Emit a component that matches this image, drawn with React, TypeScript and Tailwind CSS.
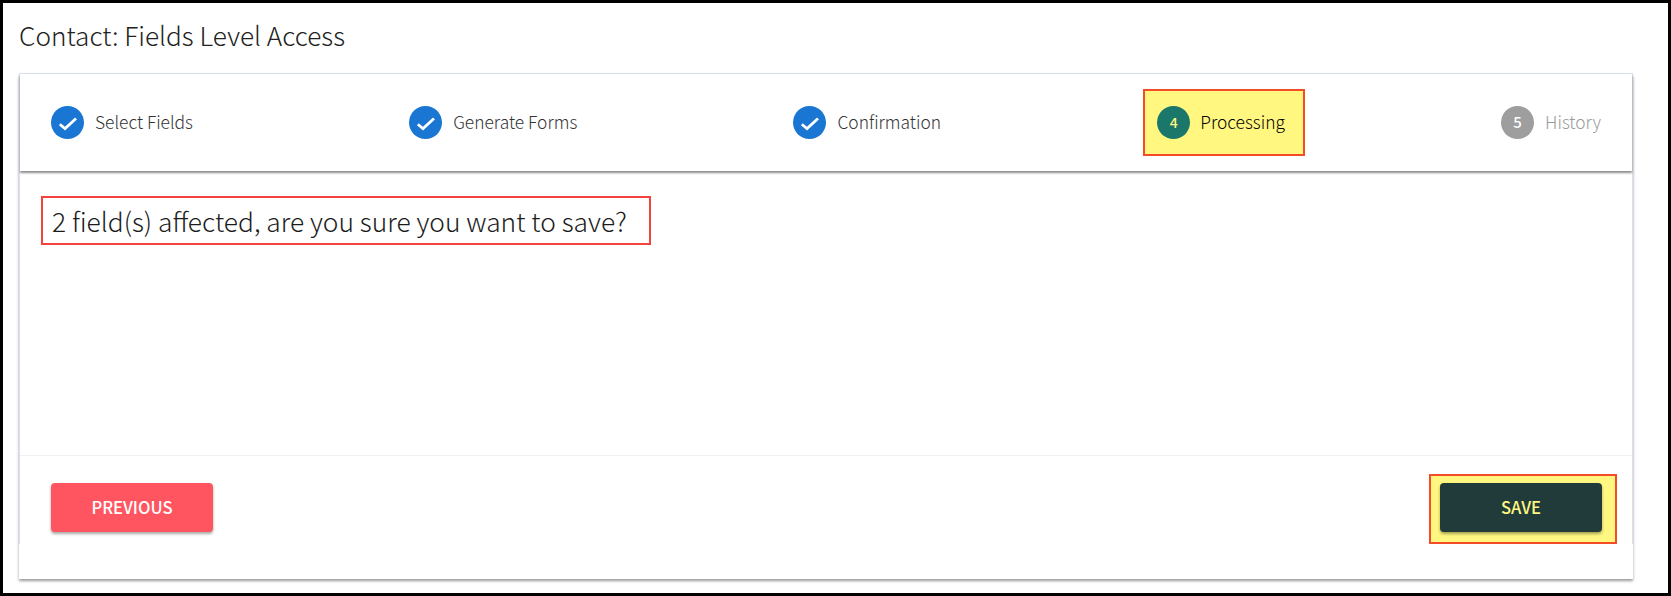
import React from 'react';

const FONT = 'font-["Noto_Sans_CJK_SC","Noto_Sans",sans-serif]';

const Check = () => (
  <svg viewBox="0 0 24 24" className="h-[24px] w-[24px]" fill="none" stroke="#fff" strokeWidth="2.7">
    <path d="M3.8 13.2 9 17.6 20 7.4" />
  </svg>
);

const DoneStep = ({ label }: { label: string }) => (
  <div className="flex items-center">
    <div className="flex h-[33px] w-[33px] items-center justify-center rounded-full bg-[#1976d2]">
      <Check />
    </div>
    <span className="ml-[11px] text-[17.4px] font-light text-[#333]">{label}</span>
  </div>
);

const App: React.FC = () => {
  return (
    <div className={`flex h-[596px] w-full flex-col overflow-hidden border-[3px] border-black bg-white pr-[35px] pl-[16px] ${FONT}`}>
      <h1 className="mt-[13px] h-[38px] text-[26.2px] leading-[38px] font-light text-[#222]">
        Contact: Fields Level Access
      </h1>

      <div className="mt-[19px] flex h-[506px] flex-col rounded-t-[4px] bg-white shadow-[0_2px_3px_rgba(0,0,0,0.4)]">
        <div className="flex h-[471px] flex-col border-x border-t border-[#d9dfee]">
          <div className="flex h-[97px] items-center justify-between pr-[31px] pl-[31px] shadow-[0_2px_2px_rgba(0,0,0,0.45)]">
            <DoneStep label="Select Fields" />
            <DoneStep label="Generate Forms" />
            <DoneStep label="Confirmation" />
            <div className="mr-[-20px] ml-[-14px] flex h-[67px] items-center border-2 border-[#f44c27] bg-[#fff780] pr-[18px] pl-[12px]">
              <div className="flex h-[33px] w-[33px] items-center justify-center rounded-full bg-[#1b776a] text-[14px] font-medium text-[#fff780]">
                4
              </div>
              <span className="ml-[10px] text-[17.4px] font-light text-black">Processing</span>
            </div>
            <div className="flex items-center">
              <div className="flex h-[33px] w-[33px] items-center justify-center rounded-full bg-[#9e9e9e] text-[15px] font-medium text-white">
                5
              </div>
              <span className="ml-[11px] text-[17.4px] font-light text-[#999]">History</span>
            </div>
          </div>

          <div className="flex-1 pt-[25px] pl-[21px]">
            <div className="flex h-[49px] w-[610px] items-center border-2 border-[#f4433f] pl-[9px] text-[26.35px] font-light text-[#1c1c1c]">
              2 field(s) affected, are you sure you want to save?
            </div>
          </div>

          <div className="flex h-[89px] items-start justify-between border-t border-[#f0f1f4] pr-[15px] pl-[31px]">
            <button className="mt-[27px] flex h-[49px] w-[162px] items-center justify-center rounded-[4px] bg-[#ff5560] text-[16.6px] font-medium text-white shadow-[0_2px_3px_rgba(0,0,0,0.35)]">
              PREVIOUS
            </button>
            <div className="mt-[18px] flex h-[70px] w-[188px] items-start border-2 border-[#f44c27] bg-[#fff780] pt-[7px] pl-[9px]">
              <button className="flex h-[49px] w-[162px] items-center justify-center rounded-[4px] bg-[#213b3b] text-[16.6px] font-medium text-[#fff780] shadow-[0_2px_3px_rgba(0,0,0,0.35)]">
                SAVE
              </button>
            </div>
          </div>
        </div>
      </div>
    </div>
  );
};

export default App;
